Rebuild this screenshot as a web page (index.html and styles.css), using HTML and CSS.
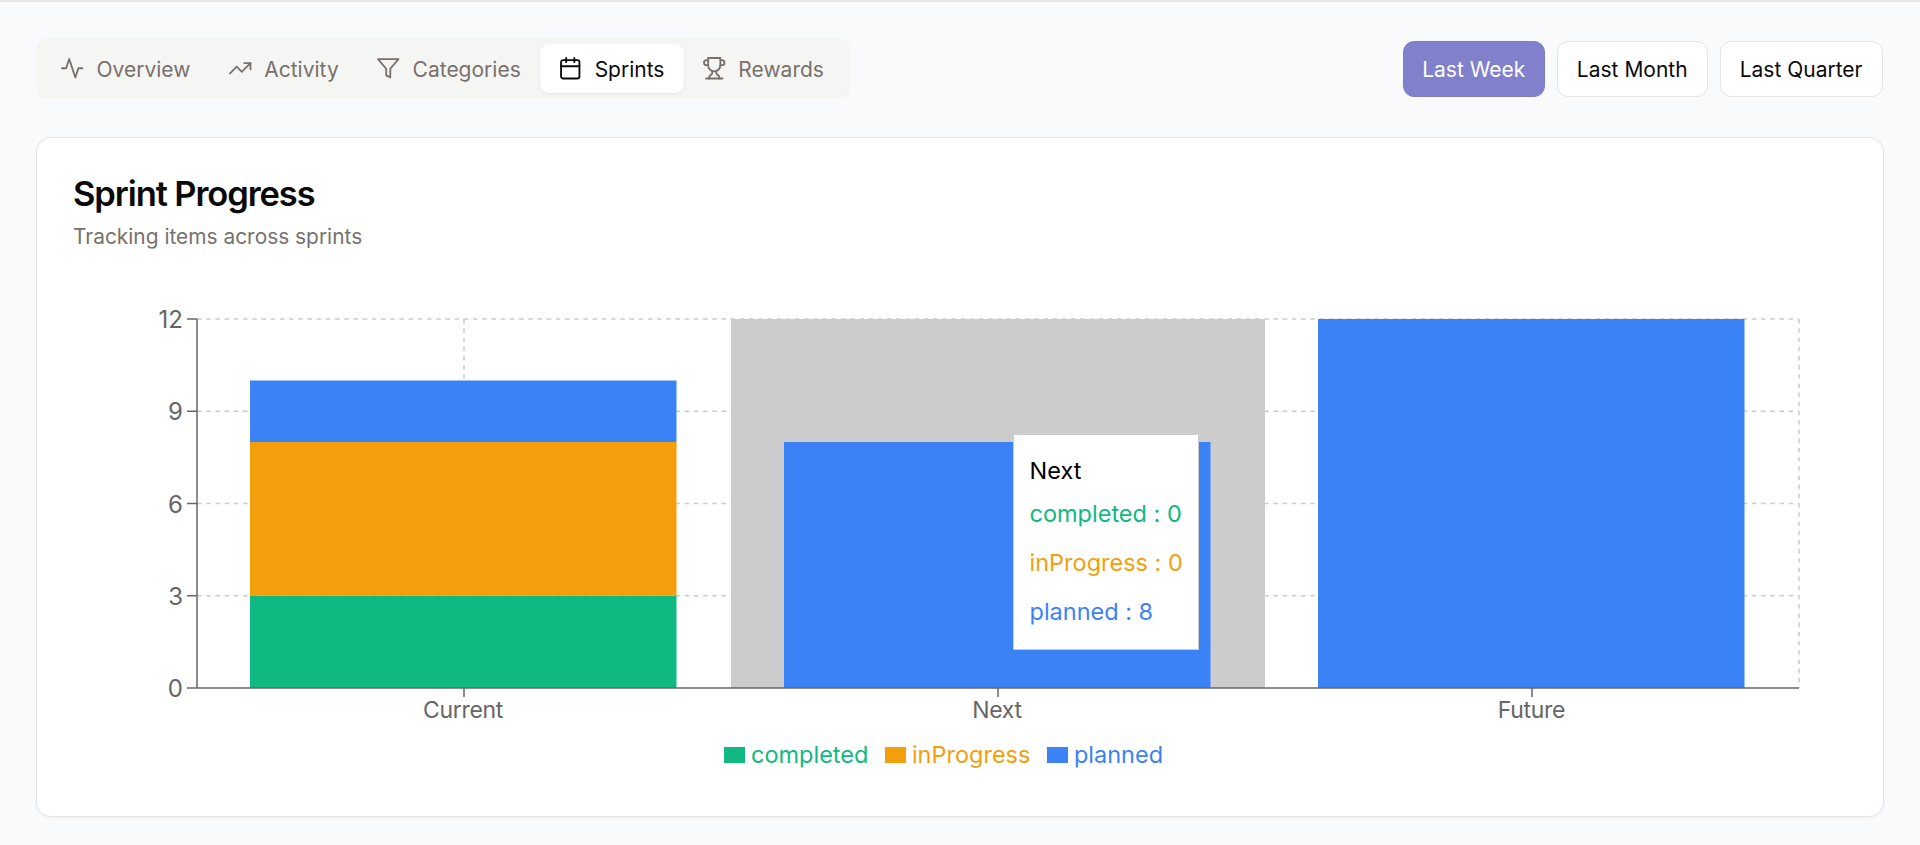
FILE: index.html
```html
<!DOCTYPE html>
<html lang="en">
<head>
<meta charset="utf-8">
<title>Sprint Progress</title>
<link rel="stylesheet" href="styles.css">
</head>
<body>
<main class="page">
  <header class="toolbar">
    <nav class="tabs">
      <div class="tab">
        <svg class="icon" viewBox="0 0 24 24"><polyline points="22 12 18 12 15 21 9 3 6 12 2 12"/></svg>
        <span class="tab-text">Overview</span>
      </div>
      <div class="tab">
        <svg class="icon" viewBox="0 0 24 24"><polyline points="22 7 13.5 15.5 8.5 10.5 2 17"/><polyline points="16 7 22 7 22 13"/></svg>
        <span class="tab-text">Activity</span>
      </div>
      <div class="tab">
        <svg class="icon" viewBox="0 0 24 24"><polygon points="22 3 2 3 10 12.46 10 19 14 21 14 12.46 22 3"/></svg>
        <span class="tab-text">Categories</span>
      </div>
      <div class="tab tab-active">
        <svg class="icon" viewBox="0 0 24 24"><rect x="3" y="4" width="18" height="18" rx="2"/><line x1="16" y1="2" x2="16" y2="6"/><line x1="8" y1="2" x2="8" y2="6"/><line x1="3" y1="10" x2="21" y2="10"/></svg>
        <span class="tab-text">Sprints</span>
      </div>
      <div class="tab">
        <svg class="icon" viewBox="0 0 24 24"><path d="M6 9H4.5a2.5 2.5 0 0 1 0-5H6"/><path d="M18 9h1.5a2.5 2.5 0 0 0 0-5H18"/><path d="M4 22h16"/><path d="M10 14.66V17c0 .55-.47.98-.97 1.21C7.85 18.75 7 20.24 7 22"/><path d="M14 14.66V17c0 .55.47.98.97 1.21C16.15 18.75 17 20.24 17 22"/><path d="M18 2H6v7a6 6 0 0 0 12 0V2Z"/></svg>
        <span class="tab-text">Rewards</span>
      </div>
    </nav>
    <div class="ranges">
      <button class="range range-active">Last Week</button>
      <button class="range">Last Month</button>
      <button class="range">Last Quarter</button>
    </div>
  </header>

  <section class="card">
    <h1 class="title">Sprint Progress</h1>
    <p class="subtitle">Tracking items across sprints</p>
    <div class="chart">
      <svg class="plot" width="1770" height="430" viewBox="0 0 1770 430">
        <g class="grid">
          <line x1="122" y1="19" x2="1724" y2="19"/>
          <line x1="122" y1="111.25" x2="1724" y2="111.25"/>
          <line x1="122" y1="203.5" x2="1724" y2="203.5"/>
          <line x1="122" y1="295.75" x2="1724" y2="295.75"/>
          <line x1="389" y1="19" x2="389" y2="388"/>
          <line x1="923" y1="19" x2="923" y2="388"/>
          <line x1="1457" y1="19" x2="1457" y2="388"/>
          <line x1="1724" y1="19" x2="1724" y2="388"/>
        </g>
        <rect class="cursor" x="656" y="19" width="534" height="369"/>
        <rect class="bar-done" x="175" y="295.75" width="426.5" height="92.25"/>
        <rect class="bar-prog" x="175" y="142" width="426.5" height="153.75"/>
        <rect class="bar-plan" x="175" y="80.5" width="426.5" height="61.5"/>
        <rect class="bar-plan" x="709" y="142" width="426.5" height="246"/>
        <rect class="bar-plan" x="1243" y="19" width="426.5" height="369"/>
        <g class="axis">
          <line x1="122" y1="19" x2="122" y2="388"/>
          <line x1="122" y1="388" x2="1724" y2="388"/>
          <line x1="112" y1="19" x2="122" y2="19"/>
          <line x1="112" y1="111.25" x2="122" y2="111.25"/>
          <line x1="112" y1="203.5" x2="122" y2="203.5"/>
          <line x1="112" y1="295.75" x2="122" y2="295.75"/>
          <line x1="112" y1="388" x2="122" y2="388"/>
          <line x1="389" y1="388" x2="389" y2="397"/>
          <line x1="923" y1="388" x2="923" y2="397"/>
          <line x1="1457" y1="388" x2="1457" y2="397"/>
        </g>
        <g class="y-labels">
          <text x="108" y="28">12</text>
          <text x="108" y="120">9</text>
          <text x="108" y="212.5">6</text>
          <text x="108" y="305">3</text>
          <text x="108" y="397">0</text>
        </g>
        <g class="x-labels">
          <text x="388" y="418">Current</text>
          <text x="922" y="418">Next</text>
          <text x="1456.5" y="418">Future</text>
        </g>
      </svg>
      <ul class="legend">
        <li class="legend-item legend-done"><i class="swatch"></i>completed</li>
        <li class="legend-item legend-prog"><i class="swatch"></i>inProgress</li>
        <li class="legend-item legend-plan"><i class="swatch"></i>planned</li>
      </ul>
      <div class="tooltip">
        <p class="tip-label">Next</p>
        <p class="tip-item legend-done">completed : 0</p>
        <p class="tip-item legend-prog">inProgress : 0</p>
        <p class="tip-item legend-plan">planned : 8</p>
      </div>
    </div>
  </section>
</main>
</body>
</html>
```
FILE: styles.css
```css
* { box-sizing: border-box; }
html, body { margin: 0; height: 100%; }
body {
  background: #f9fafb;
  color: #0c0a09;
  font-family: Inter, "Liberation Sans", sans-serif;
  overflow: hidden;
}
.page {
  height: 845px;
  padding: 36px 36.5px 0 36px;
  border-top: 2px solid #e7e5e4;
}
.toolbar {
  display: flex;
  align-items: center;
  justify-content: space-between;
  margin-bottom: 38px;
}
.tabs {
  display: flex;
  padding: 6px 7px 6px 6px;
  height: 61px;
  background: #f5f5f4;
  border-radius: 12px;
}
.tab {
  display: flex;
  align-items: center;
  gap: 12px;
  padding: 0 19.4px 0 18px;
  font-size: 21px;
  font-weight: 430;
  color: #78716c;
  border-radius: 9px;
}
.tab-text { padding-top: 2px; }
.tab-active {
  background: #fff;
  color: #0c0a09;
  box-shadow: 0 1px 3px rgba(0, 0, 0, .08);
}
.icon {
  width: 24.5px;
  height: 24.5px;
  flex: none;
  fill: none;
  stroke: currentColor;
  stroke-width: 1.8;
  stroke-linecap: round;
  stroke-linejoin: round;
}
.ranges { display: flex; gap: 12px; margin-right: 1px; }
.range {
  height: 56px;
  padding: 2px 19px 0;
  font: 430 21px Inter, "Liberation Sans", sans-serif;
  color: #0c0a09;
  background: #fff;
  border: 1.5px solid #e7e5e4;
  border-radius: 11px;
}
.range-active {
  padding: 2px 18.5px 0;
  color: #fff;
  background: #8080cc;
  border-color: #7d7dcb;
}
.card {
  height: 680px;
  padding: 36px 35.5px 36px 36px;
  background: #fff;
  border: 1.5px solid #e7e5e4;
  border-radius: 15px;
  box-shadow: 0 1px 3px rgba(0, 0, 0, .05);
}
.title {
  margin: 0;
  font-size: 34.5px;
  line-height: 40px;
  font-weight: 600;
  letter-spacing: -1.1px;
  color: #0a0a0a;
}
.subtitle {
  margin: 7.5px 0 0;
  font-size: 20.9px;
  line-height: 30px;
  color: #78716c;
}
.chart {
  position: relative;
  margin-top: 48px;
}
.plot { display: block; margin-left: 1.5px; }
.grid line { stroke: #ccc; stroke-width: 1.5; stroke-dasharray: 4.6 4.6; }
.axis line { stroke: #666; stroke-width: 1.5; }
.cursor { fill: #ccc; }
.bar-done { fill: #10b981; }
.bar-prog { fill: #f59e0b; }
.bar-plan { fill: #3b82f6; }
.y-labels text, .x-labels text { fill: #666; }
.y-labels text { font-size: 24px; text-anchor: end; }
.x-labels text { font-size: 23px; letter-spacing: -.3px; text-anchor: middle; }
.legend {
  display: flex;
  justify-content: center;
  gap: 16.5px;
  margin: 9.5px 0 0;
  padding: 0 33px 0 0;
  list-style: none;
}
.legend-item {
  display: flex;
  align-items: center;
  font-size: 23.5px;
  line-height: 32px;
}
.swatch {
  width: 21.5px;
  height: 16px;
  margin-right: 5.5px;
  background: currentColor;
}
.legend-done { color: #10b981; }
.legend-prog { color: #f59e0b; }
.legend-plan { color: #3b82f6; }
.tooltip {
  position: absolute;
  left: 939.5px;
  top: 134.5px;
  width: 186px;
  height: 216px;
  padding: 17.5px 16px 0;
  background: #fff;
  border: 1.5px solid #ccc;
  white-space: nowrap;
  font-feature-settings: "calt" 0;
}
.tip-label {
  margin: 0;
  font-size: 23.5px;
  line-height: 36px;
  color: #000;
}
.tip-item {
  margin: 0;
  font-size: 23.5px;
  line-height: 49px;
}
```
